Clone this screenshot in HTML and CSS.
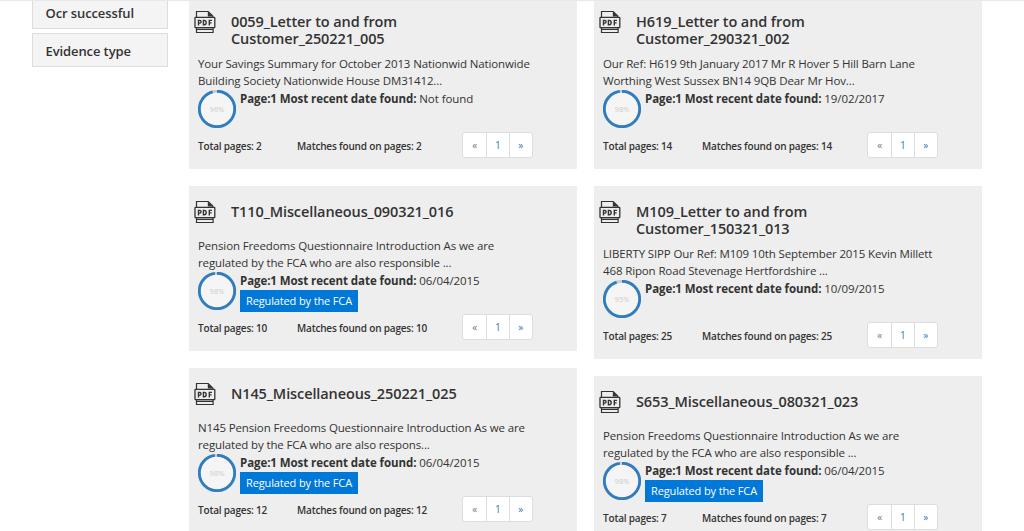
FILE: index.html
```
<!DOCTYPE html>
<html lang="en">
<head>
    <meta charset="UTF-8">
    <meta name="viewport" content="width=device-width, initial-scale=1.0">
    <title>Document Search</title>
    <link rel="stylesheet" href="styles.css">
</head>
<body>
    <!-- shared pdf icon -->
    <svg class="sprite" width="0" height="0">
        <symbol id="pdf" viewBox="0 0 22 24">
            <path d="M2.5 7V1.5h11.7l4.6 4.6V7M2.5 17.5v5h16.6v-5M2.5 19.4h16.6" fill="none" stroke="#333" stroke-width="1.2"/>
            <path d="M13.8 1.2l5.2 5.2h-5.2z" fill="#333"/>
            <rect x="1" y="7.4" width="19.8" height="10.2" rx="0.6" fill="#eee" stroke="#333" stroke-width="1.3"/>
            <path d="M4.5 15.4V10.4h1.4a1.1 1.3 0 0 1 0 2.7H4.5M9.4 10.4v4.4h0.8a2 2.2 0 0 0 0-4.4zM18 10.4h-2.7v5M15.3 12.9h2.3" fill="none" stroke="#333" stroke-width="1.4"/>
        </symbol>
    </svg>
    <div class="page">
        <div class="sidebar">
            <div class="filter">Ocr successful</div>
            <div class="filter">Evidence type</div>
        </div>
        <div class="column">
            <div class="card">
                <div class="card-header">
                    <svg class="pdf-icon"><use href="#pdf"/></svg>
                    <h3>0059_Letter to and from<br>Customer_250221_005</h3>
                </div>
                <p class="summary">Your Savings Summary for October 2013 Nationwid Nationwide<br>Building Society Nationwide House DM31412...</p>
                <div class="match">
                    <svg class="score" viewBox="0 0 38 38"><circle class="track" cx="19" cy="19" r="17.7"/><circle class="bar" cx="19" cy="19" r="17.7" pathLength="100" stroke-dasharray="96 4"/><text x="19" y="21.5">96%</text></svg>
                    <div><p class="meta"><b>Page:1 Most recent date found:</b> Not found</p></div>
                </div>
                <div class="card-footer">
                    <span class="total">Total pages: 2</span>
                    <span class="found">Matches found on pages: 2</span>
                    <div class="pager"><a class="disabled">«</a><a>1</a><a>»</a></div>
                </div>
            </div>
            <div class="card">
                <div class="card-header">
                    <svg class="pdf-icon"><use href="#pdf"/></svg>
                    <h3>T110_Miscellaneous_090321_016</h3>
                </div>
                <p class="summary">Pension Freedoms Questionnaire Introduction As we are<br>regulated by the FCA who are also responsible ...</p>
                <div class="match">
                    <svg class="score" viewBox="0 0 38 38"><circle class="track" cx="19" cy="19" r="17.7"/><circle class="bar" cx="19" cy="19" r="17.7" pathLength="100" stroke-dasharray="98 2"/><text x="19" y="21.5">98%</text></svg>
                    <div><p class="meta"><b>Page:1 Most recent date found:</b> 06/04/2015</p><span class="tag">Regulated by the FCA</span></div>
                </div>
                <div class="card-footer">
                    <span class="total">Total pages: 10</span>
                    <span class="found">Matches found on pages: 10</span>
                    <div class="pager"><a class="disabled">«</a><a>1</a><a>»</a></div>
                </div>
            </div>
            <div class="card">
                <div class="card-header">
                    <svg class="pdf-icon"><use href="#pdf"/></svg>
                    <h3>N145_Miscellaneous_250221_025</h3>
                </div>
                <p class="summary">N145 Pension Freedoms Questionnaire Introduction As we are<br>regulated by the FCA who are also respons...</p>
                <div class="match">
                    <svg class="score" viewBox="0 0 38 38"><circle class="track" cx="19" cy="19" r="17.7"/><circle class="bar" cx="19" cy="19" r="17.7" pathLength="100" stroke-dasharray="98 2"/><text x="19" y="21.5">98%</text></svg>
                    <div><p class="meta"><b>Page:1 Most recent date found:</b> 06/04/2015</p><span class="tag">Regulated by the FCA</span></div>
                </div>
                <div class="card-footer">
                    <span class="total">Total pages: 12</span>
                    <span class="found">Matches found on pages: 12</span>
                    <div class="pager"><a class="disabled">«</a><a>1</a><a>»</a></div>
                </div>
            </div>
        </div>
        <div class="column">
            <div class="card">
                <div class="card-header">
                    <svg class="pdf-icon"><use href="#pdf"/></svg>
                    <h3>H619_Letter to and from<br>Customer_290321_002</h3>
                </div>
                <p class="summary">Our Ref: H619 9th January 2017 Mr R Hover 5 Hill Barn Lane<br>Worthing West Sussex BN14 9QB Dear Mr Hov...</p>
                <div class="match">
                    <svg class="score" viewBox="0 0 38 38"><circle class="track" cx="19" cy="19" r="17.7"/><circle class="bar" cx="19" cy="19" r="17.7" pathLength="100" stroke-dasharray="98 2"/><text x="19" y="21.5">98%</text></svg>
                    <div><p class="meta"><b>Page:1 Most recent date found:</b> 19/02/2017</p></div>
                </div>
                <div class="card-footer">
                    <span class="total">Total pages: 14</span>
                    <span class="found">Matches found on pages: 14</span>
                    <div class="pager"><a class="disabled">«</a><a>1</a><a>»</a></div>
                </div>
            </div>
            <div class="card">
                <div class="card-header">
                    <svg class="pdf-icon"><use href="#pdf"/></svg>
                    <h3>M109_Letter to and from<br>Customer_150321_013</h3>
                </div>
                <p class="summary">LIBERTY SIPP Our Ref: M109 10th September 2015 Kevin Millett<br>468 Ripon Road Stevenage Hertfordshire ...</p>
                <div class="match">
                    <svg class="score" viewBox="0 0 38 38"><circle class="track" cx="19" cy="19" r="17.7"/><circle class="bar" cx="19" cy="19" r="17.7" pathLength="100" stroke-dasharray="95 5"/><text x="19" y="21.5">95%</text></svg>
                    <div><p class="meta"><b>Page:1 Most recent date found:</b> 10/09/2015</p></div>
                </div>
                <div class="card-footer">
                    <span class="total">Total pages: 25</span>
                    <span class="found">Matches found on pages: 25</span>
                    <div class="pager"><a class="disabled">«</a><a>1</a><a>»</a></div>
                </div>
            </div>
            <div class="card">
                <div class="card-header">
                    <svg class="pdf-icon"><use href="#pdf"/></svg>
                    <h3>S653_Miscellaneous_080321_023</h3>
                </div>
                <p class="summary">Pension Freedoms Questionnaire Introduction As we are<br>regulated by the FCA who are also responsible ...</p>
                <div class="match">
                    <svg class="score" viewBox="0 0 38 38"><circle class="track" cx="19" cy="19" r="17.7"/><circle class="bar" cx="19" cy="19" r="17.7" pathLength="100" stroke-dasharray="98 2"/><text x="19" y="21.5">98%</text></svg>
                    <div><p class="meta"><b>Page:1 Most recent date found:</b> 06/04/2015</p><span class="tag">Regulated by the FCA</span></div>
                </div>
                <div class="card-footer">
                    <span class="total">Total pages: 7</span>
                    <span class="found">Matches found on pages: 7</span>
                    <div class="pager"><a class="disabled">«</a><a>1</a><a>»</a></div>
                </div>
            </div>
        </div>
    </div>
</body>
</html>
```
FILE: styles.css
```
* {
    margin: 0;
    padding: 0;
    box-sizing: border-box;
}
body {
    height: 531px;
    overflow: hidden;
    background-color: #fff;
    color: #333;
    font-family: "Open Sans", "Noto Sans", sans-serif;
    font-size: 11.5px;
    line-height: 17.2px;
}
.sprite {
    display: none;
}
.page {
    display: flex;
    height: 531px;
    overflow: hidden;
    border-top: 1px solid #e9e9e9;
}
.sidebar {
    width: 136px;
    margin-left: 32px;
    margin-right: 21.4px;
    margin-top: -6px;
}
.filter {
    height: 34px;
    margin-bottom: 4px;
    padding-left: 12.5px;
    border: 1px solid #ddd;
    background-color: #f4f4f4;
    font-size: 13px;
    font-weight: 600;
    letter-spacing: -0.1px;
    line-height: 34px;
    white-space: nowrap;
}
.column {
    width: 388px;
    margin-right: 17px;
    margin-top: -5px;
}
.card {
    margin-bottom: 17px;
    padding: 14px 8px 11.4px 8.6px;
    background-color: #eee;
    white-space: nowrap;
}
.card-header {
    display: flex;
    min-height: 37.2px;
}
.pdf-icon {
    width: 22px;
    height: 24px;
    margin-left: -3.5px;
    margin-right: 14.5px;
}
h3 {
    padding-top: 4px;
    padding-bottom: 7.4px;
    font-size: 14.5px;
    font-weight: 600;
    letter-spacing: -0.1px;
    line-height: 16.9px;
}
.summary {
    letter-spacing: -0.13px;
}
.meta {
    padding-top: 0.6px;
    letter-spacing: -0.07px;
}
.match {
    display: flex;
    height: 42px;
}
.score {
    width: 38px;
    height: 38px;
    margin-right: 4px;
}
.score circle {
    fill: #f5f5f5;
    stroke-width: 2.8;
}
.score .track {
    stroke: #ccc;
}
.score .bar {
    fill: none;
    stroke: #2f7dc1;
    transform: rotate(-90deg);
    transform-origin: center;
}
.score text {
    fill: #ccc;
    font-size: 7.5px;
    text-anchor: middle;
}
.tag {
    display: block;
    width: 118px;
    height: 22px;
    margin-top: 0.7px;
    background-color: #0078d7;
    color: #fff;
    font-size: 11px;
    letter-spacing: -0.13px;
    line-height: 22px;
    text-align: center;
}
.card-footer {
    display: flex;
    align-items: center;
    height: 26px;
    font-size: 10px;
    font-weight: 600;
    letter-spacing: -0.18px;
}
.total {
    width: 99px;
    padding-top: 4.4px;
}
.found {
    width: 165.2px;
    padding-top: 4.4px;
}
.pager {
    display: flex;
    height: 26px;
    border: 1px solid #ddd;
    border-radius: 3px;
    background-color: #fff;
    font-weight: 400;
}
.pager a {
    width: 22.8px;
    color: #337ab7;
    line-height: 25px;
    text-align: center;
}
.pager a + a {
    border-left: 1px solid #ddd;
}
.pager .disabled {
    color: #777;
}
```
